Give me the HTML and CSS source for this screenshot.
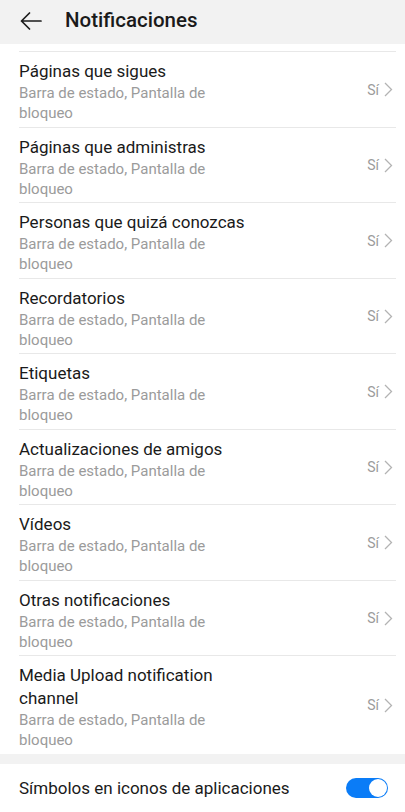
FILE: index.html
```html
<!DOCTYPE html>
<html lang="es">
<head>
    <meta charset="UTF-8">
    <meta name="viewport" content="width=device-width, initial-scale=1.0">
    <title>Notificaciones</title>
    <link rel="stylesheet" href="styles.css">
</head>
<body>

    <header class="top-bar">
        <a href="#" class="back-btn">
            <svg width="22" height="18" viewBox="0 0 22 18">
                <path d="M21 9H1.5M9.5 1L1.5 9l8 8" fill="none" stroke="#1c1c1c" stroke-width="1.7" stroke-linecap="round" stroke-linejoin="round"/>
            </svg>
        </a>
        <h1 class="page-title">Notificaciones</h1>
    </header>

    <ul class="channel-list">
        <li class="channel">
            <div class="channel-text">
                <div class="channel-name">Páginas que sigues</div>
                <div class="channel-desc">Barra de estado, Pantalla de bloqueo</div>
            </div>
            <div class="channel-value">Sí <svg class="chevron" width="9" height="15" viewBox="0 0 9 15"><path d="M1 1l6.5 6.5L1 14" fill="none" stroke="#b3b3b3" stroke-width="1.3"/></svg></div>
        </li>
        <li class="channel">
            <div class="channel-text">
                <div class="channel-name">Páginas que administras</div>
                <div class="channel-desc">Barra de estado, Pantalla de bloqueo</div>
            </div>
            <div class="channel-value">Sí <svg class="chevron" width="9" height="15" viewBox="0 0 9 15"><path d="M1 1l6.5 6.5L1 14" fill="none" stroke="#b3b3b3" stroke-width="1.3"/></svg></div>
        </li>
        <li class="channel">
            <div class="channel-text">
                <div class="channel-name">Personas que quizá conozcas</div>
                <div class="channel-desc">Barra de estado, Pantalla de bloqueo</div>
            </div>
            <div class="channel-value">Sí <svg class="chevron" width="9" height="15" viewBox="0 0 9 15"><path d="M1 1l6.5 6.5L1 14" fill="none" stroke="#b3b3b3" stroke-width="1.3"/></svg></div>
        </li>
        <li class="channel">
            <div class="channel-text">
                <div class="channel-name">Recordatorios</div>
                <div class="channel-desc">Barra de estado, Pantalla de bloqueo</div>
            </div>
            <div class="channel-value">Sí <svg class="chevron" width="9" height="15" viewBox="0 0 9 15"><path d="M1 1l6.5 6.5L1 14" fill="none" stroke="#b3b3b3" stroke-width="1.3"/></svg></div>
        </li>
        <li class="channel">
            <div class="channel-text">
                <div class="channel-name">Etiquetas</div>
                <div class="channel-desc">Barra de estado, Pantalla de bloqueo</div>
            </div>
            <div class="channel-value">Sí <svg class="chevron" width="9" height="15" viewBox="0 0 9 15"><path d="M1 1l6.5 6.5L1 14" fill="none" stroke="#b3b3b3" stroke-width="1.3"/></svg></div>
        </li>
        <li class="channel">
            <div class="channel-text">
                <div class="channel-name">Actualizaciones de amigos</div>
                <div class="channel-desc">Barra de estado, Pantalla de bloqueo</div>
            </div>
            <div class="channel-value">Sí <svg class="chevron" width="9" height="15" viewBox="0 0 9 15"><path d="M1 1l6.5 6.5L1 14" fill="none" stroke="#b3b3b3" stroke-width="1.3"/></svg></div>
        </li>
        <li class="channel">
            <div class="channel-text">
                <div class="channel-name">Vídeos</div>
                <div class="channel-desc">Barra de estado, Pantalla de bloqueo</div>
            </div>
            <div class="channel-value">Sí <svg class="chevron" width="9" height="15" viewBox="0 0 9 15"><path d="M1 1l6.5 6.5L1 14" fill="none" stroke="#b3b3b3" stroke-width="1.3"/></svg></div>
        </li>
        <li class="channel">
            <div class="channel-text">
                <div class="channel-name">Otras notificaciones</div>
                <div class="channel-desc">Barra de estado, Pantalla de bloqueo</div>
            </div>
            <div class="channel-value">Sí <svg class="chevron" width="9" height="15" viewBox="0 0 9 15"><path d="M1 1l6.5 6.5L1 14" fill="none" stroke="#b3b3b3" stroke-width="1.3"/></svg></div>
        </li>
        <li class="channel">
            <div class="channel-text">
                <div class="channel-name">Media Upload notification channel</div>
                <div class="channel-desc">Barra de estado, Pantalla de bloqueo</div>
            </div>
            <div class="channel-value">Sí <svg class="chevron" width="9" height="15" viewBox="0 0 9 15"><path d="M1 1l6.5 6.5L1 14" fill="none" stroke="#b3b3b3" stroke-width="1.3"/></svg></div>
        </li>
    </ul>

    <div class="section-gap"></div>

    <div class="setting-row">
        <span class="setting-label">Símbolos en iconos de aplicaciones</span>
        <div class="toggle on"><div class="knob"></div></div>
    </div>

</body>
</html>
```

FILE: styles.css
```css
body {
    margin: 0;
    font-family: Roboto, "Noto Sans", sans-serif;
    background-color: #ffffff;
    color: #1a1a1a;
}

.top-bar {
    display: flex;
    align-items: center;
    box-sizing: border-box;
    height: 44px;
    padding: 0 0 4px 20px;
    background-color: #f2f2f2;
}

.back-btn {
    display: flex;
    margin-top: 2px;
}

.page-title {
    margin: 0 0 0 23px;
    font-size: 20.5px;
    font-weight: 500;
    color: #1a1a1a;
}

.channel-list {
    list-style: none;
    margin: 7px 0 0 0;
    padding: 0 9px 0 19px;
}

.channel {
    display: flex;
    align-items: center;
    justify-content: space-between;
    border-top: 1px solid #e8e8e8;
    padding: 8px 3px 3.5px 0;
}

.channel-text {
    width: 236px;
}

.channel-name {
    font-size: 17px;
    line-height: 23px;
    color: #1a1a1a;
}

.channel-desc {
    font-size: 15px;
    line-height: 20px;
    color: #9b9b9b;
}

.channel-value {
    display: flex;
    align-items: center;
    gap: 5px;
    font-size: 14px;
    color: #9b9b9b;
    margin-top: -4px;
}

.section-gap {
    height: 10px;
    background-color: #f2f2f2;
}

.setting-row {
    display: flex;
    align-items: center;
    justify-content: space-between;
    height: 48px;
    padding: 0 17px 0 19px;
}

.setting-label {
    font-size: 17px;
    color: #1a1a1a;
}

.toggle {
    position: relative;
    width: 42px;
    height: 20px;
    border-radius: 10px;
    background-color: #cccccc;
}

.toggle.on {
    background-color: #0a7cf7;
}

.knob {
    position: absolute;
    top: 1px;
    right: 1px;
    width: 18px;
    height: 18px;
    border-radius: 50%;
    background-color: #ffffff;
}
```
